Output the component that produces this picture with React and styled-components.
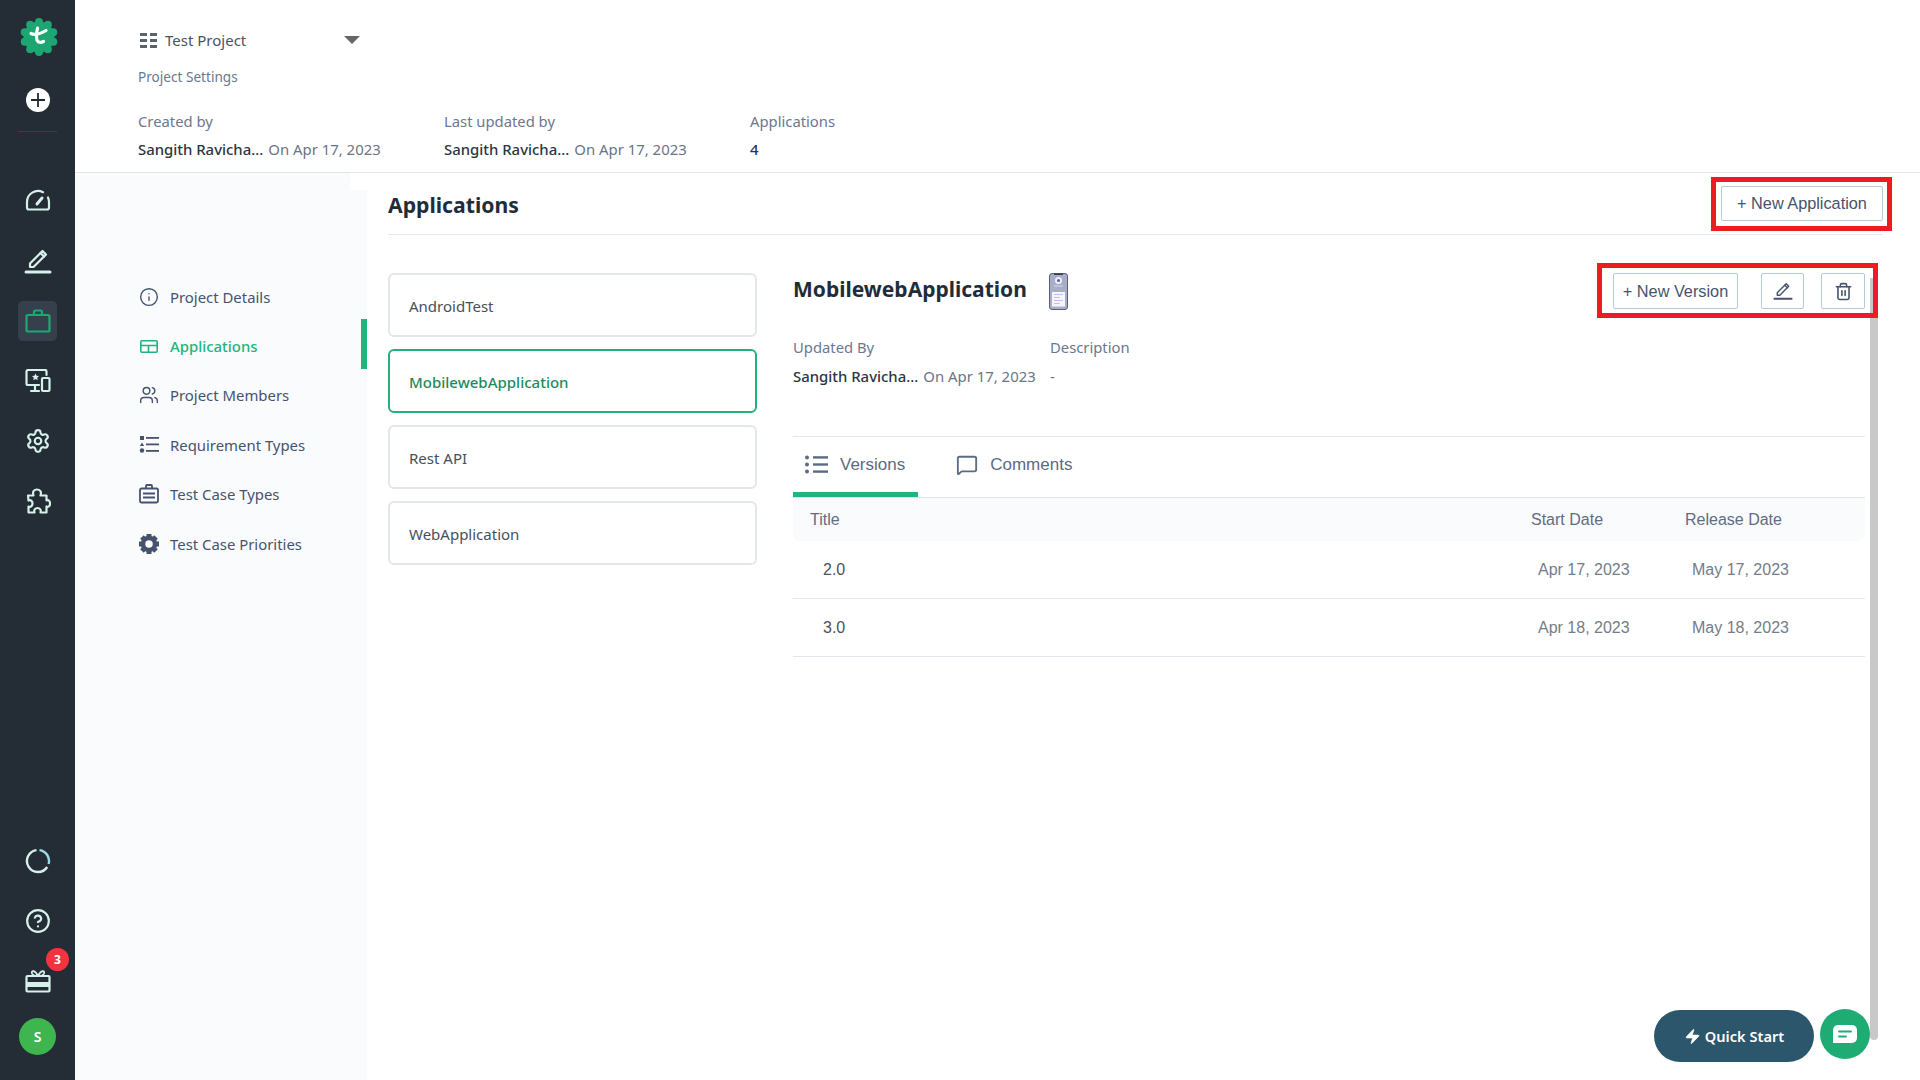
import React from "react";
import styled, { createGlobalStyle } from "styled-components";
import { Info, Users, Settings, CircleHelp, MessageSquare, Trash2, Zap } from "lucide-react";

const GlobalStyle = createGlobalStyle`
  html, body { margin: 0; padding: 0; height: 100%; background: #fff; }
  * { box-sizing: border-box; }
  body { font-family: "Noto Sans", sans-serif; color: #2b3543; }
`;

const App_ = styled.div`
  position: relative;
  display: flex;
  width: 1920px;
  height: 1080px;
  overflow: hidden;
`;

const Rail = styled.aside`
  width: 75px;
  flex: none;
  background: #242c36;
  display: flex;
  flex-direction: column;
  align-items: center;
  color: #d6f0ea;
  padding-top: 18px;
`;

const RailLogo = styled.div`
  width: 38px;
  height: 38px;
  margin-left: 3px;
`;

const AddButton = styled.div`
  width: 24px;
  height: 24px;
  margin-top: 32px;
  border-radius: 50%;
  background: #fff;
  color: #1f2a36;
  display: flex;
  align-items: center;
  justify-content: center;
`;

const RailDivider = styled.div`
  width: 39px;
  height: 1px;
  margin-top: 19px;
  margin-bottom: 48.5px;
  background: #14503f;
`;

const RailItem = styled.div`
  position: relative;
  width: 39px;
  height: 40px;
  margin-bottom: ${(p) => p.$after ?? 20}px;
  border-radius: 5px;
  display: flex;
  align-items: center;
  justify-content: center;
  background: ${(p) => (p.$active ? "#363f4c" : "transparent")};
  color: ${(p) => (p.$active ? "#1fa873" : "#d6f0ea")};
`;

const RailBottom = styled.div`
  margin-top: auto;
  display: flex;
  flex-direction: column;
  align-items: center;
  padding-bottom: 25px;
`;

const Badge = styled.span`
  position: absolute;
  top: -13px;
  right: -12px;
  width: 23px;
  height: 23px;
  border-radius: 50%;
  background: #f5333f;
  color: #fff;
  font-size: 12px;
  font-weight: 700;
  display: flex;
  align-items: center;
  justify-content: center;
`;

const Avatar = styled.div`
  width: 37px;
  height: 37px;
  border-radius: 50%;
  background: #3eb54f;
  color: #fff;
  font-size: 14px;
  font-weight: 600;
  display: flex;
  align-items: center;
  justify-content: center;
`;

const Page = styled.div`
  flex: 1;
  display: flex;
  flex-direction: column;
  min-width: 0;
`;

const Header = styled.header`
  height: 173px;
  flex: none;
  padding: 30px 0 0 63px;
  border-bottom: 1px solid #e3e6ec;
`;

const ProjectSelect = styled.div`
  width: 222px;
  height: 20px;
  display: flex;
  align-items: center;
  font-size: 15px;
  color: #4a5360;
`;

const ProjectName = styled.span`
  margin-left: 7px;
  flex: 1;
`;

const Caret = styled.span`
  width: 0;
  height: 0;
  border-left: 8px solid transparent;
  border-right: 8px solid transparent;
  border-top: 8px solid #666;
`;

const Crumb = styled.div`
  margin-top: 17px;
  font-size: 13.6px;
  line-height: 20px;
  color: #6b7890;
`;

const Stats = styled.div`
  display: flex;
  margin-top: 24px;
`;

const Stat = styled.div`
  width: 306px;
`;

const Label = styled.div`
  font-size: 14.8px;
  line-height: 20px;
  color: #6b7890;
`;

const Value = styled.div`
  margin-top: 8px;
  font-size: 14.9px;
  line-height: 20px;
  color: #6b7583;
  white-space: nowrap;
`;

const Name = styled.span`
  color: #2b3642;
  font-weight: 500;
  margin-right: 5px;
`;

const Body = styled.div`
  flex: 1;
  display: flex;
  min-height: 0;
`;

const SideNav = styled.nav`
  position: relative;
  width: 292px;
  flex: none;
  padding-top: 99px;
  background: #fafbfd;
  &::before {
    content: "";
    position: absolute;
    top: 0;
    right: 0;
    width: 17px;
    height: 17px;
    background: #fff;
  }
`;

const NavItem = styled.div`
  position: relative;
  height: 49.4px;
  padding-left: 64px;
  display: flex;
  align-items: center;
  gap: 11px;
  font-size: 14.9px;
  font-weight: ${(p) => (p.$active ? 500 : 400)};
  color: ${(p) => (p.$active ? "#20b57c" : "#46536e")};
  ${(p) =>
    p.$active &&
    `&::after {
      content: "";
      position: absolute;
      top: -2px;
      right: 0;
      width: 6px;
      height: 50px;
      background: #20b57c;
    }`}
`;

const NavIcon = styled.span`
  width: 20px;
  height: 20px;
  display: flex;
  align-items: center;
  justify-content: center;
`;

const Main = styled.main`
  flex: 1;
  padding: 0 37px 0 21px;
  min-width: 0;
`;

const MainHead = styled.div`
  height: 62px;
  display: flex;
  align-items: center;
  justify-content: space-between;
  border-bottom: 1px solid #e3e6ec;
`;

const Heading = styled.h1`
  margin: 2px 0 0;
  font-size: 21.2px;
  font-weight: 700;
  color: #1f2d3a;
`;

const Highlight = styled.div`
  position: relative;
  display: flex;
  align-items: center;
  border: 5px solid #ed1c24;
  margin-top: ${(p) => p.$lift || 0}px;
  margin-right: ${(p) => p.$pull}px;
  padding: ${(p) => p.$pad};
`;

const OutlineButton = styled.button`
  height: ${(p) => p.$h || 36}px;
  width: ${(p) => p.$w}px;
  margin-right: ${(p) => p.$after || 0}px;
  padding: 0;
  background: #fff;
  border: 1px solid #b5cad8;
  border-radius: 2px;
  font-family: "Liberation Sans", Arial, sans-serif;
  font-size: 16.3px;
  color: #46536e;
  display: flex;
  align-items: center;
  justify-content: center;
`;

const Columns = styled.div`
  display: flex;
  gap: 36px;
  padding-top: 38px;
  margin-right: 18px;
`;

const CardList = styled.div`
  width: 369px;
  flex: none;
  display: flex;
  flex-direction: column;
  gap: 12px;
`;

const AppCard = styled.div`
  height: 64px;
  padding: 2px 0 0 19px;
  display: flex;
  align-items: center;
  border: 2px solid ${(p) => (p.$active ? "#20b27a" : "#e3e6ec")};
  border-radius: 6px;
  font-size: 15px;
  font-weight: ${(p) => (p.$active ? 500 : 400)};
  color: ${(p) => (p.$active ? "#1f8a5f" : "#46505c")};
`;

const Detail = styled.section`
  flex: 1;
  min-width: 0;
`;

const DetailHead = styled.div`
  display: flex;
  align-items: flex-start;
  justify-content: space-between;
`;

const TitleRow = styled.div`
  display: flex;
  align-items: center;
  gap: 22px;
  height: 37px;
`;

const DetailTitle = styled.h2`
  margin: 0 0 5px;
  font-size: 21px;
  font-weight: 700;
  color: #1f2d3a;
`;

const Meta = styled.div`
  display: flex;
  margin-top: 19px;
`;

const MetaCol = styled.div`
  width: 257px;
`;

const MetaValue = styled(Value)`
  margin-top: 9px;
`;

const Tabs = styled.div`
  display: flex;
  height: 62px;
  margin-top: 50px;
  border-top: 1px solid #e3e6ec;
  border-bottom: 1px solid #e0e3e8;
`;

const Tab = styled.div`
  display: flex;
  align-items: center;
  height: 60px;
  padding: 0 13px 0 12px;
  margin-left: ${(p) => p.$offset || 0}px;
  gap: 12px;
  font-family: "Liberation Sans", Arial, sans-serif;
  font-size: 17px;
  color: #5c6b84;
  border-bottom: ${(p) => (p.$active ? "5px solid #20b57c" : "5px solid transparent")};
`;

const TableHead = styled.div`
  display: grid;
  grid-template-columns: 721px 154px 1fr;
  align-items: center;
  height: 43px;
  padding-left: 17px;
  background: #fafbfd;
  border-radius: 0 0 6px 6px;
  font-family: "Liberation Sans", Arial, sans-serif;
  font-size: 16px;
  color: #5e6d85;
`;

const TableRow = styled.div`
  display: grid;
  grid-template-columns: 715px 154px 1fr;
  align-items: center;
  height: 58px;
  padding-left: 30px;
  border-bottom: 1px solid #e3e6ec;
  font-family: "Liberation Sans", Arial, sans-serif;
  font-size: 16px;
  color: #737d8a;
`;

const RowTitle = styled.span`
  color: #4a5360;
`;

const ScrollThumb = styled.div`
  position: absolute;
  top: 278px;
  right: 42px;
  width: 8px;
  height: 762px;
  border-radius: 0 0 4px 4px;
  background: #c8c8c8;
`;

const QuickStart = styled.button`
  position: absolute;
  left: 1654px;
  top: 1010px;
  width: 160px;
  height: 52px;
  border: none;
  border-radius: 26px;
  background: #2c566b;
  color: #fff;
  font-family: "Noto Sans", sans-serif;
  font-size: 14.6px;
  font-weight: 600;
  display: flex;
  align-items: center;
  justify-content: center;
  gap: 4px;
`;

const ChatBubble = styled.div`
  position: absolute;
  left: 1820px;
  top: 1009px;
  width: 50px;
  height: 50px;
  border-radius: 50%;
  background: #1eab74;
  display: flex;
  align-items: center;
  justify-content: center;
`;

const stroke = { fill: "none", stroke: "currentColor", strokeWidth: 2.2, strokeLinecap: "round", strokeLinejoin: "round" };

const Logo = () => {
  const lobes = Array.from({ length: 10 }, (_, i) => {
    const a = (i / 10) * Math.PI * 2 - Math.PI / 2;
    return <circle key={i} cx={19 + Math.cos(a) * 15} cy={19 + Math.sin(a) * 15} r="4" fill="#1ea672" />;
  });
  return (
    <svg width="38" height="38" viewBox="0 0 38 38">
      <circle cx="19" cy="19" r="15.5" fill="#1ea672" />
      {lobes}
      <path d="M11 15.5c3 1.6 9 .6 15-3M17.5 10c-1 5-1.5 9-.5 12 .8 2.4 3.5 3 6.5 1.5" fill="none" stroke="#fff" strokeWidth="3.2" strokeLinecap="round" />
    </svg>
  );
};

const GaugeIcon = () => (
  <svg width="26" height="24" viewBox="0 0 26 24" {...stroke}>
    <path d="M18 3.2A11 11 0 0 0 2 13v5.500a2 2 0 0 0 2 2h18a2 2 0 0 0 2-2V13a11 11 0 0 0-1-4.500" />
    <path d="M12 15l5-6" strokeWidth="3" />
  </svg>
);

const PencilLineIcon = ({ size = 28, width = 2.2 }) => (
  <svg width={size} height={size} viewBox="0 0 28 28" {...stroke} strokeWidth={width}>
    <path d="M6 20v-3.500L18.500 4l3.500 3.500L9.500 20z" />
    <path d="M16.500 6l3.500 3.500" />
    <path d="M2 25h24" strokeWidth={width + 0.8} />
  </svg>
);

const CaseIcon = () => (
  <svg width="26" height="26" viewBox="0 0 26 26" {...stroke}>
    <rect x="1.500" y="7" width="23" height="16.500" rx="1.500" />
    <path d="M9 7V4a1.500 1.500 0 0 1 1.500-1.500h5A1.500 1.500 0 0 1 17 4v3" />
  </svg>
);

const DevicesIcon = () => (
  <svg width="26" height="24" viewBox="0 0 26 24" {...stroke}>
    <path d="M14 16H3a1.500 1.500 0 0 1-1.500-1.500v-12A1.500 1.500 0 0 1 3 1h17a1.500 1.500 0 0 1 1.500 1.500V6" />
    <path d="M10 16v5M6 22h8" />
    <rect x="17" y="9" width="7.500" height="13" rx="1" />
    <path d="M10.500 4.500l1.100 2.300 2.400.3-1.800 1.700.5 2.400-2.200-1.200-2.200 1.200.5-2.400L7 7.100l2.400-.3z" fill="currentColor" stroke="none" />
  </svg>
);

const PuzzleIcon = () => (
  <svg width="26" height="26" viewBox="0 0 26 26" {...stroke}>
    <path d="M3 7.500H8.500C7 3 9.500 1.500 12 1.500S17 3 15.500 7.500H21.500V12.500C24 11.500 25 13.500 25 15.500S24 19.500 21.500 18.500V24.500H15.500C16.500 21.500 14.500 20 12.500 20S8.500 21.500 9.500 24.500H3.500V18.500C6 19.500 7.500 17.500 7.500 15.500S6 11.500 3.500 12.500Z" />
  </svg>
);

const RingIcon = () => (
  <svg width="26" height="26" viewBox="0 0 26 26" fill="none" strokeWidth="2.400">
    <path d="M14.500 2.100A11 11 0 0 1 23.600 16" stroke="#9adbe6" />
    <path d="M22.200 19A11 11 0 1 1 11.500 2.100" stroke="currentColor" />
  </svg>
);

const GiftIcon = () => (
  <svg width="26" height="24" viewBox="0 0 26 24" fill="none" stroke="currentColor" strokeWidth="2.200">
    <rect x="1.500" y="7" width="23" height="15.500" rx="1" />
    <path d="M13 7C10 1 6 1 7 4.500 7.500 6 10 7 13 7zM13 7c3-6 7-6 6-2.500C18.500 6 16 7 13 7z" strokeWidth="1.800" />
    <rect x="2" y="13" width="22" height="5" fill="currentColor" stroke="none" />
  </svg>
);

const ProjectIcon = () => (
  <svg width="18" height="15" viewBox="0 0 18 15" fill="#5a626c" style={{ marginLeft: 2 }}>
    <rect x="0" y="0" width="7" height="3" />
    <rect x="0" y="6" width="7" height="3" />
    <rect x="0" y="12" width="7" height="3" />
    <rect x="10" y="0" width="7" height="3" />
    <rect x="10" y="6" width="7" height="3" />
    <rect x="10" y="12" width="7" height="3" />
  </svg>
);

const LayoutIcon = () => (
  <svg width="18" height="13" viewBox="0 0 18 13" fill="none" stroke="currentColor" strokeWidth="1.600">
    <rect x=".8" y=".8" width="16.400" height="11.400" rx="1" />
    <path d="M.8 5.500h16.400M8.500 5.500v6.700" />
  </svg>
);

const ReqIcon = () => (
  <svg width="20" height="17" viewBox="0 0 20 17" fill="currentColor">
    <rect x="1" y="0" width="4" height="4" />
    <path d="M3 6.500l2.200 3.500H.8z" />
    <circle cx="3" cy="14.500" r="2.200" />
    <rect x="7" y="1" width="13" height="1.800" />
    <rect x="7" y="7.500" width="13" height="1.800" />
    <rect x="7" y="14" width="13" height="1.800" />
  </svg>
);

const CaseTypeIcon = () => (
  <svg width="20" height="20" viewBox="0 0 20 20" fill="none" stroke="currentColor" strokeWidth="1.800">
    <rect x="1" y="4.500" width="18" height="14" rx="1.500" />
    <path d="M7 4.500V2a1 1 0 0 1 1-1h4a1 1 0 0 1 1 1v2.500" />
    <path d="M4 9.500h12M4 13.500h12" />
  </svg>
);

const PriorityIcon = () => {
  const teeth = Array.from({ length: 8 }, (_, i) => {
    const a = (i / 8) * 360;
    return <rect key={i} x="7.500" y="0" width="5" height="4" transform={`rotate(${a} 10 10)`} />;
  });
  return (
    <svg width="20" height="20" viewBox="0 0 20 20" fill="currentColor">
      {teeth}
      <circle cx="10" cy="10" r="6" fill="none" stroke="currentColor" strokeWidth="4.500" />
    </svg>
  );
};

const VersionsIcon = () => (
  <svg width="23" height="19" viewBox="0 0 23 19" fill="currentColor">
    <circle cx="2" cy="2.500" r="2" />
    <circle cx="2" cy="9.500" r="2" />
    <circle cx="2" cy="16.500" r="2" />
    <rect x="8" y="1.200" width="15" height="2.400" />
    <rect x="8" y="8.300" width="15" height="2.400" />
    <rect x="8" y="15.400" width="15" height="2.400" />
  </svg>
);

const PhoneArt = () => (
  <svg width="19" height="37" viewBox="0 0 19 37">
    <rect x=".5" y=".5" width="18" height="36" rx="2.500" fill="#a9aec8" stroke="#5b5f78" strokeWidth="1" />
    <rect x="5" y=".5" width="9" height="1.500" fill="#3c3f55" />
    <circle cx="9.500" cy="7.500" r="3.500" fill="#eef0fb" />
    <circle cx="9.500" cy="7.500" r="1.500" fill="#5b54d6" />
    <rect x="5" y="12.500" width="9" height="1" fill="#d5d8e8" />
    <rect x="3" y="19" width="13" height="14.500" fill="#f5f5fb" />
    <rect x="5" y="21" width="9" height="1" fill="#c3bdf2" />
    <rect x="5" y="24" width="6" height="1" fill="#c3bdf2" />
    <rect x="5" y="27" width="9" height="1" fill="#c3bdf2" />
    <rect x="5" y="30" width="6" height="1" fill="#c3bdf2" />
  </svg>
);

const ChatIcon = () => (
  <svg width="26" height="20" viewBox="0 0 26 20">
    <path d="M6 1h14a5 5 0 0 1 5 5v8a5 5 0 0 1-5 5H1V6a5 5 0 0 1 5-5z" fill="#fff" />
    <path d="M7 7.500h12M7 12.500h7" stroke="#1eab74" strokeWidth="1.800" strokeLinecap="round" />
  </svg>
);

const navItems = [
  { label: "Project Details", icon: <Info size={20} strokeWidth={1.7} /> },
  { label: "Applications", icon: <LayoutIcon />, active: true },
  { label: "Project Members", icon: <Users size={20} strokeWidth={1.7} /> },
  { label: "Requirement Types", icon: <ReqIcon /> },
  { label: "Test Case Types", icon: <CaseTypeIcon /> },
  { label: "Test Case Priorities", icon: <PriorityIcon /> },
];

const apps = ["AndroidTest", "MobilewebApplication", "Rest API", "WebApplication"];

const versions = [
  { title: "2.0", start: "Apr 17, 2023", release: "May 17, 2023" },
  { title: "3.0", start: "Apr 18, 2023", release: "May 18, 2023" },
];

const App = () => {
  return (
    <App_>
      <GlobalStyle />
      <Rail>
        <RailLogo><Logo /></RailLogo>
        <AddButton>
          <svg width="14" height="14" viewBox="0 0 14 14" stroke="currentColor" strokeWidth="1.800"><path d="M7 0v14M0 7h14" /></svg>
        </AddButton>
        <RailDivider />
        <RailItem><GaugeIcon /></RailItem>
        <RailItem><PencilLineIcon /></RailItem>
        <RailItem $active><CaseIcon /></RailItem>
        <RailItem><DevicesIcon /></RailItem>
        <RailItem><Settings size={26} strokeWidth={2} /></RailItem>
        <RailItem><PuzzleIcon /></RailItem>
        <RailBottom>
          <RailItem><RingIcon /></RailItem>
          <RailItem><CircleHelp size={26} strokeWidth={2} /></RailItem>
          <RailItem $after={17.500}><GiftIcon /><Badge>3</Badge></RailItem>
          <Avatar>S</Avatar>
        </RailBottom>
      </Rail>
      <Page>
        <Header>
          <ProjectSelect>
            <ProjectIcon />
            <ProjectName>Test Project</ProjectName>
            <Caret />
          </ProjectSelect>
          <Crumb>Project Settings</Crumb>
          <Stats>
            <Stat>
              <Label>Created by</Label>
              <Value><Name>Sangith Ravicha...</Name>On Apr 17, 2023</Value>
            </Stat>
            <Stat>
              <Label>Last updated by</Label>
              <Value><Name>Sangith Ravicha...</Name>On Apr 17, 2023</Value>
            </Stat>
            <Stat>
              <Label>Applications</Label>
              <Value><Name>4</Name></Value>
            </Stat>
          </Stats>
        </Header>
        <Body>
          <SideNav>
            {navItems.map((item) => (
              <NavItem key={item.label} $active={item.active}>
                <NavIcon>{item.icon}</NavIcon>
                {item.label}
              </NavItem>
            ))}
          </SideNav>
          <Main>
            <ScrollThumb />
            <MainHead>
              <Heading>Applications</Heading>
              <Highlight $pull={-9} $pad="4px 4px 5px 5px">
                <OutlineButton $w={162} $h={35}>+ New Application</OutlineButton>
              </Highlight>
            </MainHead>
            <Columns>
              <CardList>
                {apps.map((name) => (
                  <AppCard key={name} $active={name === "MobilewebApplication"}>{name}</AppCard>
                ))}
              </CardList>
              <Detail>
                <DetailHead>
                  <TitleRow>
                    <DetailTitle>MobilewebApplication</DetailTitle>
                    <PhoneArt />
                  </TitleRow>
                  <Highlight $lift={-10} $pull={-13} $pad="5px 8px 4px 11px">
                    <OutlineButton $w={125} $after={23}>+ New Version</OutlineButton>
                    <OutlineButton $w={43} $after={17}><PencilLineIcon size={20} width={2} /></OutlineButton>
                    <OutlineButton $w={44}><Trash2 size={19} strokeWidth={2} /></OutlineButton>
                  </Highlight>
                </DetailHead>
                <Meta>
                  <MetaCol>
                    <Label>Updated By</Label>
                    <MetaValue><Name>Sangith Ravicha...</Name>On Apr 17, 2023</MetaValue>
                  </MetaCol>
                  <MetaCol>
                    <Label>Description</Label>
                    <MetaValue>-</MetaValue>
                  </MetaCol>
                </Meta>
                <Tabs>
                  <Tab $active><VersionsIcon />Versions</Tab>
                  <Tab $offset={26}><MessageSquare size={22} strokeWidth={2} />Comments</Tab>
                </Tabs>
                <TableHead>
                  <span>Title</span>
                  <span>Start Date</span>
                  <span>Release Date</span>
                </TableHead>
                {versions.map((v) => (
                  <TableRow key={v.title}>
                    <RowTitle>{v.title}</RowTitle>
                    <span>{v.start}</span>
                    <span>{v.release}</span>
                  </TableRow>
                ))}
              </Detail>
            </Columns>
          </Main>
        </Body>
      </Page>
      <QuickStart><Zap size={17} fill="#fff" strokeWidth={1} />Quick Start</QuickStart>
      <ChatBubble><ChatIcon /></ChatBubble>
    </App_>
  );
};

export default App;
